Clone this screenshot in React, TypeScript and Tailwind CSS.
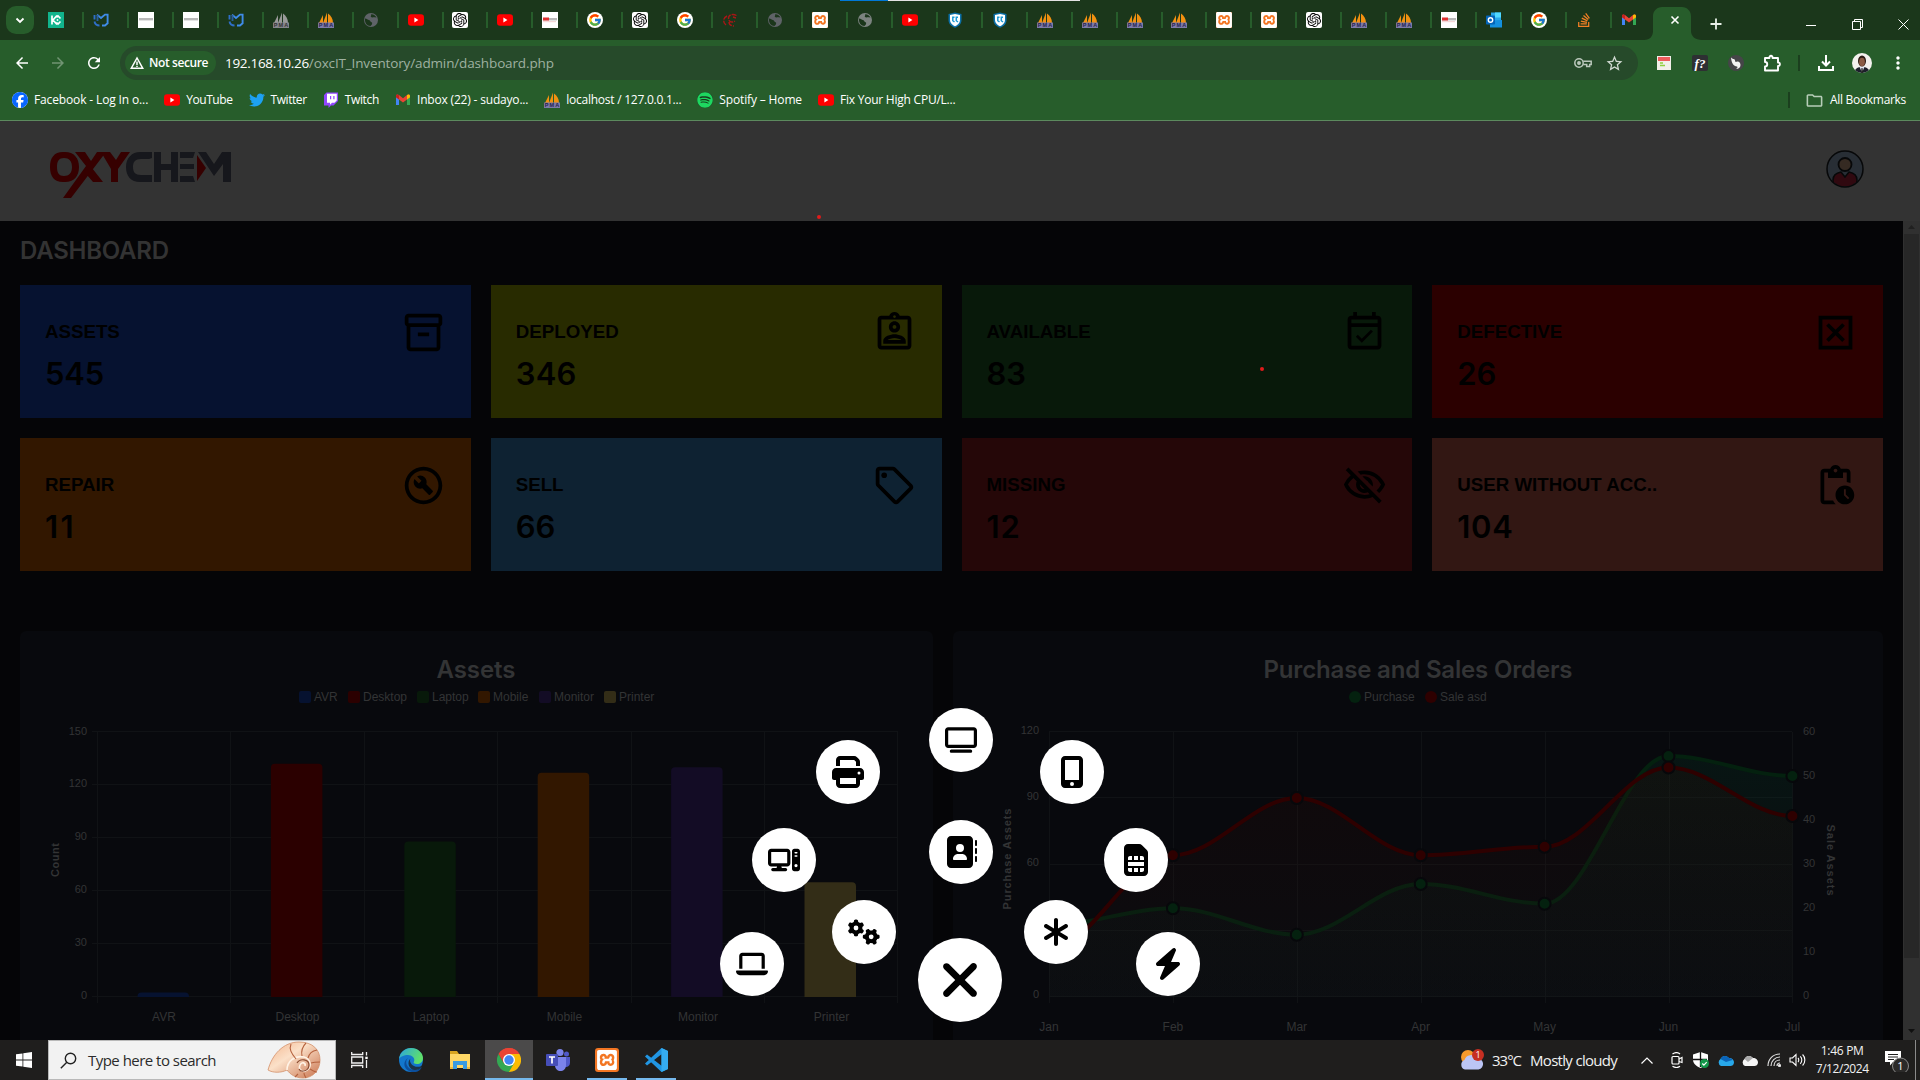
import { useLayoutEffect, useRef, useState, type ReactNode } from "react";
import {
  FaTv, FaPrint, FaMobileScreenButton, FaComputer, FaAddressBook, FaSimCard, FaGears, FaAsterisk,
  FaLaptop, FaBolt, FaXmark, FaSpotify, FaTwitter, FaStackOverflow, FaFacebook,
} from "react-icons/fa6";
import {
  MdOutlineInventory2, MdOutlineAssignmentInd, MdOutlineEventAvailable, MdOutlineDisabledByDefault,
  MdOutlineBuildCircle, MdOutlineSell, MdOutlineVisibilityOff, MdOutlinePendingActions,
  MdArrowBack, MdArrowForward, MdRefresh, MdStarBorder, MdVpnKey, MdMoreVert, MdOutlineExtension, MdOutlineFolder,
} from "react-icons/md";
import { FcGoogle } from "react-icons/fc";
import { SiOpenai, SiXampp } from "react-icons/si";

/* Text that is tracked so that it fills a given width. */
function Fit({ w, className = "", children }: { w: number; className?: string; children: string }) {
  const ref = useRef<HTMLSpanElement>(null);
  const [gap, setGap] = useState(0);
  useLayoutEffect(() => {
    if (ref.current) setGap((w - ref.current.offsetWidth) / children.length);
  }, [w, children]);
  return (
    <span ref={ref} className={`inline-block shrink-0 whitespace-nowrap ${className}`} style={{ letterSpacing: gap }}>
      {children}
    </span>
  );
}

/* ---------- small logos ---------- */

const YouTube = () => (
  <svg viewBox="0 0 16 16" className="size-4">
    <rect x="0" y="2.2" width="16" height="11.6" rx="3" fill="#f00" />
    <path d="M6.4 5.6v4.8l4-2.4z" fill="#fff" />
  </svg>
);
const Pma = ({ gray = false }: { gray?: boolean }) => (
  <svg viewBox="0 0 16 16" className="size-4">
    <g fill={gray ? "#9a9a9a" : "#f29111"}>
      <path d="M1 11 5 3v8z" />
      <path d="M5 11 9 .6V11z" />
      <path d="M10 11V1.5c3 2 5 5.500 5 9.500z" />
    </g>
    <rect x="0" y="10.500" width="16" height="5.500" fill={gray ? "#85858c" : "#7d7aa8"} />
    <text x="0.800" y="15.300" fontSize="5.500" fontWeight="700" fontFamily="Liberation Sans" fill={gray ? "#333" : "#26254f"} textLength="14.500">PMA</text>
  </svg>
);
const Globe = ({ light = false }: { light?: boolean }) => (
  <svg viewBox="0 0 16 16" className="size-4">
    <circle cx="8" cy="8" r="7" fill={light ? "#7c8380" : "#5f6368"} />
    <path d="M2 6.500c2 0 2.600 1.200 4 1.500 1.500.3 1.200 2 2.500 2.200 1.300.3.500 2.800-1 3.800C4 14 1.500 11 2 6.500zM8 2.200c1 1-.8 1.600 0 2.800.8 1 3.200-.2 5.500.8C12.500 3.300 10.500 2 8 2.200z" fill="#1b361b" />
  </svg>
);
const Gpt = () => (
  <span className="flex size-4 items-center justify-center rounded-[2px] bg-white text-black">
    <SiOpenai className="size-3.5" />
  </span>
);
const Xampp = () => (
  <span className="flex size-4 items-center justify-center rounded-[1px] bg-[#f37623] text-white">
    <SiXampp className="size-4" />
  </span>
);
const Google = () => (
  <span className="flex size-4 items-center justify-center rounded-full bg-white">
    <FcGoogle className="size-3.5" />
  </span>
);
const Page = ({ red = false }: { red?: boolean }) => (
  <svg viewBox="0 0 16 16" className="size-4">
    <rect width="16" height="16" fill="#fff" />
    <rect x="1" y="6" width="14" height="2.400" fill="#b9b9b9" />
    {red && <rect x="1" y="5.500" width="6" height="3" fill="#e03030" />}
    {red && <rect x="1" y="9.500" width="13" height="0.600" fill="#e8b0b0" />}
  </svg>
);
const MBlue = () => (
  <svg viewBox="0 0 16 16" className="size-4" fill="none" stroke="#3f8be8" strokeWidth="1.900">
    <path d="M4 2.600 8 6l4-3.400h2.600v8.600L12 13.500H9" />
    <path d="M1.500 3v4.500M1.500 9.500c.5 2.500 2 4 5 4" stroke="#2f6fc8" />
    <path d="M4.500 3v6" stroke="#2a5d9c" />
  </svg>
);
const Kc = () => (
  <svg viewBox="0 0 16 16" className="size-4" fill="none" stroke="#fff" strokeWidth="1.700">
    <rect width="16" height="16" fill="#11b48c" stroke="none" />
    <path d="M4 3.500v9M9 3.500 5 8l4 4.500M8.500 5.500 10 4l2.500 2.500M8.500 10.500 10 12l2.500-2.500" />
    <circle cx="9.500" cy="8" r="0.900" fill="#fff" stroke="none" />
  </svg>
);
const Swirl = () => (
  <svg viewBox="0 0 16 16" className="size-4" fill="none" stroke="#a81616" strokeWidth="1.400">
    <path d="M14.500 3.500C10 1 6 3.500 6.500 7c.5 3 4 4 6.500 2M5 4C1 6 .5 10 4 13M7 10c0 2.500 2 4 5 4M11 5l3 1" strokeDasharray="5 1" />
  </svg>
);
const Shield = () => (
  <svg viewBox="0 0 16 16" className="size-4">
    <path d="M8 .5 14.500 2v6c0 4-3 6.500-6.500 7.800C4.500 14.500 1.500 12 1.500 8V2z" fill="#0b6fa8" />
    <path d="M8 2 13 3v5c0 3-2.300 5-5 6.200C5.300 13 3 11 3 8V3z" fill="#fff" />
    <path d="M7.500 5.200H5.800v3.500l1.700 1.300M11 5.200H9.300v3.500L11 10" stroke="#1d9ad6" strokeWidth="1.500" fill="none" />
  </svg>
);
const Outlook = () => (
  <svg viewBox="0 0 16 16" className="size-4">
    <rect x="5" y="0.500" width="10" height="11" fill="#28a8ea" />
    <rect x="9" y="0.500" width="6" height="5" fill="#50d9ff" />
    <path d="M4 8.500 16 8v7.500H4z" fill="#1490df" />
    <rect x="0" y="3.500" width="9" height="9" rx="0.800" fill="#0364b8" />
    <circle cx="4.500" cy="8" r="2.200" fill="none" stroke="#fff" strokeWidth="1.400" />
  </svg>
);
const Gmail = () => (
  <svg viewBox="0 0 16 16" className="size-4">
    <path d="M1 4v9h3V7z" fill="#4285f4" />
    <path d="M15 4v9h-3V7z" fill="#34a853" />
    <path d="M1 3.500C1.500 2 3 2.200 4 3l4 3.200L12 3c1-.8 2.500-1 3 .5v1.800L8 10.500 1 5.300z" fill="#ea4335" />
    <path d="M12 3c1.200-1 3-.6 3 1v1.300L12 7.600z" fill="#fbbc04" />
    <path d="M1 4v1.300l3 2.300V3.200L2.500 2.600C1.500 2.700 1 3.200 1 4z" fill="#c5221f" />
  </svg>
);
const Twitch = () => (
  <svg viewBox="0 0 16 16" className="size-4">
    <path d="M1 3 3.500.5H15V9l-4.500 4.500H8L5.500 16v-2.500H1z" fill="#9146ff" />
    <path d="M4 1.700h9.800v6.800l-2.300 2.200H9l-2 2v-2H4z" fill="#fff" />
    <path d="M7.600 4v3.200M10.900 4v3.200" stroke="#9146ff" strokeWidth="1.200" />
  </svg>
);

const favicons: ReactNode[] = [
  <Kc />, <MBlue />, <Page />, <Page />, <MBlue />, <Pma gray />, <Pma />, <Globe />, <YouTube />, <Gpt />, <YouTube />,
  <Page red />, <Google />, <Gpt />, <Google />, <Swirl />, <Globe />, <Xampp />, <Globe light />, <YouTube />, <Shield />,
  <Shield />, <Pma />, <Pma />, <Pma />, <Pma />, <Xampp />, <Xampp />, <Gpt />, <Pma />, <Pma />, <Page red />, <Outlook />,
  <Google />, <FaStackOverflow className="size-4 text-[#f48024]" />, <Gmail />,
];

/* ---------- browser chrome ---------- */

function TabStrip() {
  return (
    <div className="flex h-10 items-end bg-[#1b371b]">
      <div className="mb-[6px] ml-[6px] flex h-7 w-7 items-center justify-center rounded-[10px] bg-[#275d2b]">
        <svg viewBox="0 0 10 10" className="size-2.5" fill="none" stroke="#fff" strokeWidth="1.800"><path d="M1.500 3.500 5 7l3.500-3.500" /></svg>
      </div>
      <div className="ml-[14px] flex h-10 w-[1596px]">
        {favicons.map((icon, i) => (
          <div key={i} className="flex h-10 w-[44.940px] shrink-0 items-center">
            {icon}
            {i < favicons.length - 1 && <span className="ml-[18px] h-4 w-0.5 bg-[#275d2b]" />}
          </div>
        ))}
      </div>
      <svg viewBox="0 0 58 33" className="h-[33px] w-[58px]">
        <path d="M0 33c6 0 9-4 9-9V9c0-5 4-9 9-9h20c5 0 9 4 9 9v15c0 5 4 9 11 9z" fill="#275d2b" />
        <path d="m28 10 7 7m0-7-7 7" transform="translate(-.5 -.5)" stroke="#fff" strokeWidth="1.600" />
      </svg>
      <svg viewBox="0 0 12 12" className="mb-[10px] ml-2 size-3" stroke="#e8f0e8" strokeWidth="1.800"><path d="M6 .5v11M.5 6h11" /></svg>
      <svg viewBox="0 0 10 10" className="mb-[10px] ml-[84px] size-[10px]" stroke="#fff"><path d="M0 5.500h10" /></svg>
      <svg viewBox="0 0 11 11" className="mb-[10px] ml-9 size-[11px]" stroke="#fff" fill="none"><path d="M.5 2.500h8v8h-8zM2.500 2.500v-2h8v8h-2" /></svg>
      <svg viewBox="0 0 11 11" className="mb-[10px] ml-[35px] size-[11px]" stroke="#fff"><path d="m.5.5 10 10m0-10-10 10" /></svg>
    </div>
  );
}

function AddressBar() {
  return (
    <div className="flex h-[46px] items-center bg-[#275d2b] text-white">
      <MdArrowBack className="ml-[13px] size-[18px]" />
      <MdArrowForward className="ml-[18px] size-[18px] text-[#719473]" />
      <MdRefresh className="ml-[18px] size-[18px]" />
      <div className="ml-[17px] flex h-[34px] w-[1518px] items-center rounded-full bg-[#264a2a]">
        <div className="ml-[5px] flex h-6 w-[91px] items-center rounded-full bg-[#275d2b] pl-[5px]">
          <svg viewBox="0 0 14 13" className="mr-[5px] size-[14px]" fill="none" stroke="#fff" strokeWidth="1.500">
            <path d="M7 1.500 1.200 11.800h11.600z" /><path d="M7 5v3.500M7 9.300v1.300" />
          </svg>
          <Fit w={59} className="text-[12px] font-semibold">Not secure</Fit>
        </div>
        <Fit w={84} className="ml-[9px] text-[13.500px]">192.168.10.26</Fit>
        <Fit w={245} className="text-[13.500px] text-[#9fb1a1]">/oxcIT_Inventory/admin/dashboard.php</Fit>
        <MdVpnKey className="hidden" />
        <svg viewBox="0 0 18 12" className="ml-auto h-3 w-[18px]" fill="none" stroke="#bac7bb" strokeWidth="1.500">
          <circle cx="5" cy="6" r="4.200" /><path d="M9.200 4.300h8v3.300h-1.500v2h-3v-2H9.200" /><circle cx="5" cy="6" r="1.200" fill="#bac7bb" />
        </svg>
        <MdStarBorder className="mr-[14px] ml-[13px] size-[19px] text-[#d0d9d1]" />
      </div>
      <svg viewBox="0 0 14 14" className="ml-[19px] size-[14px]">
        <rect width="14" height="14" fill="#f1efe8" /><rect x="1" y="1" width="12" height="4" fill="#ee5b5b" />
        <path d="M3 7h3M3 9.500h5" stroke="#8fcf3c" strokeWidth="1.300" />
      </svg>
      <span className="ml-[21px] flex size-4 items-center justify-center rounded-[2px] bg-[#2e3033] font-['Liberation_Serif'] text-[13px] leading-none font-bold italic">f?</span>
      <svg viewBox="0 0 16 16" className="ml-5 size-4">
        <circle cx="8" cy="8" r="8" fill="#454548" /><path d="M3 2.500 5 4c2-.5 2 1.500 2.500 3 3-1.500 5 .5 5 3 0 2.500-2 4-4.500 4 1.500-1 2-2 1-2.500C5.500 11.500 3.500 8 3 2.500z" fill="#f3f3f3" />
      </svg>
      <svg viewBox="0 0 18 18" className="ml-[19px] size-[18px]" fill="none" stroke="#fff" strokeWidth="1.900">
        <path d="M2 4h4.500C6 1 10 1 9.500 4H15v4.500c2.500-.3 2.500 3.800 0 3.500v4.500H2v-4c3 0 3-4.500 0-4.500z" strokeLinejoin="round" />
      </svg>
      <span className="ml-[17px] h-4 w-0.5 bg-[#1b3f1e]" />
      <svg viewBox="0 0 16 16" className="ml-[18px] size-4" fill="none" stroke="#fff" strokeWidth="2">
        <path d="M8 0v10M4 6.500 8 10.500l4-4M1 11v4h14v-4" />
      </svg>
      <svg viewBox="0 0 20 20" className="ml-[18px] size-5">
        <clipPath id="me"><circle cx="10" cy="10" r="10" /></clipPath>
        <g clipPath="url(#me)">
          <rect width="20" height="20" fill="#f3f1ee" /><path d="M2 20c1-5 4-6 8-6s7 1 8 6z" fill="#1c1f2b" />
          <path d="m7.500 13.500 2.500 6.500 2.500-6.500z" fill="#e6e9f5" /><path d="M9.500 15h1l.7 5H9z" fill="#222" />
          <ellipse cx="10" cy="8" rx="4" ry="5.500" fill="#2c1a14" /><ellipse cx="10" cy="9" rx="2.900" ry="4.300" fill="#8a5a44" />
        </g>
      </svg>
      <MdMoreVert className="ml-[16px] size-5" />
    </div>
  );
}

function Bookmark({ icon, gap = "ml-[18px]", w, children }: { icon: ReactNode; gap?: string; w: number; children: string }) {
  return (
    <div className={`flex items-center gap-[6px] ${gap}`}>
      {icon}
      <Fit w={w}>{children}</Fit>
    </div>
  );
}

function BookmarkBar() {
  return (
    <div className="flex h-[35px] items-start border-b border-[#5c8a5e] bg-[#275d2b] pt-[5px] text-[12px] text-white">
      <div className="flex h-[18px] w-full items-center">
        <Bookmark gap="ml-3" w={114} icon={<span className="size-4 rounded-full bg-white"><FaFacebook className="size-4 text-[#0866ff]" /></span>}>Facebook - Log In o...</Bookmark>
        <Bookmark gap="ml-4" w={46} icon={<YouTube />}>YouTube</Bookmark>
        <Bookmark gap="ml-4" w={36} icon={<FaTwitter className="size-4 text-[#1da1f2]" />}>Twitter</Bookmark>
        <Bookmark gap="ml-4" w={34} icon={<Twitch />}>Twitch</Bookmark>
        <Bookmark gap="ml-4" w={111} icon={<Gmail />}>Inbox (22) - sudayo...</Bookmark>
        <Bookmark gap="ml-4" w={115} icon={<Pma />}>localhost / 127.0.0.1...</Bookmark>
        <Bookmark gap="ml-4" w={83} icon={<span className="size-4 rounded-full bg-[#183b1c]"><FaSpotify className="size-4 text-[#1ed760]" /></span>}>Spotify – Home</Bookmark>
        <Bookmark gap="ml-4" w={115} icon={<YouTube />}>Fix Your High CPU/L...</Bookmark>
        <span className="ml-auto h-4 w-0.5 bg-[#1b3f1e]" />
        <MdOutlineFolder className="ml-[15px] size-[19px] text-[#b7cdb8]" />
        <Fit w={76} className="mr-[14px] ml-[6px]">All Bookmarks</Fit>
      </div>
    </div>
  );
}

/* ---------- application ---------- */

function Header() {
  return (
    <header className="flex h-[100px] items-start justify-between bg-[#333333] pt-[29px] pr-14 pl-[49px]">
      <svg viewBox="0 0 182 48" className="mt-px h-12 w-[182px]">
        <g fill="#360000">
          <path fillRule="evenodd" d="M14 1h2c9 0 14 6 14 15s-5 15-14 15h-2C5 31 1 25 1 16S5 1 14 1zm1 6c-5 0-7 3-7 9s2 9 7 9 8-3 8-9-3-9-8-9z" />
          <path d="M26 1h10l6 9 6-9h9L22 47h-8l23-32zM43 17l11 14H44l-6-7z" />
          <path d="M52 1h9l6 8 5-8h9L69 18v13h-7V18z" />
          <path d="m148 4 9 13-9 13z" />
        </g>
        <g fill="#16171c">
          <path d="M103 1v6l-3 1h-8c-6 0-8 3-8 8s2 8 8 8h11v7H91c-9 0-14-6-14-15S83 1 91 1z" />
          <path d="M105 1h7v12h10V1h7v30h-7V19h-10v12h-7z" />
          <path d="M131 1h15l-2 6h-13zM131 13h14v5h-14zM131 25h13l2 6h-15z" />
          <path d="M149 1h8l8 12 8-12h9v30h-8V13l-9 12z" />
        </g>
      </svg>
      <svg viewBox="0 0 38 38" className="size-[38px]">
        <clipPath id="av"><circle cx="19" cy="19" r="17.500" /></clipPath>
        <circle cx="19" cy="19" r="18" fill="#282e35" />
        <g clipPath="url(#av)">
          <path d="M7 38v-8c0-4 3-7 8-8l4 5 4-5c5 1 8 4 8 8v8z" fill="#300910" stroke="#070809" strokeWidth="1.500" />
        </g>
        <circle cx="19" cy="14.500" r="6.500" fill="#352a22" stroke="#070809" strokeWidth="1.800" />
        <circle cx="19" cy="19" r="18" fill="none" stroke="#070809" strokeWidth="1.500" />
      </svg>
    </header>
  );
}

const cards = [
  { name: "ASSETS", value: "545", w: 59.5, bg: "bg-[#061230]", Icon: MdOutlineInventory2 },
  { name: "DEPLOYED", value: "346", w: 60.5, bg: "bg-[#282b00]", Icon: MdOutlineAssignmentInd },
  { name: "AVAILABLE", value: "83", w: 40, bg: "bg-[#08190a]", Icon: MdOutlineEventAvailable },
  { name: "DEFECTIVE", value: "26", w: 39, bg: "bg-[#2b0000]", Icon: MdOutlineDisabledByDefault },
  { name: "REPAIR", value: "11", w: 31, bg: "bg-[#321700]", Icon: MdOutlineBuildCircle },
  { name: "SELL", value: "66", w: 40, bg: "bg-[#0e2232]", Icon: MdOutlineSell },
  { name: "MISSING", value: "12", w: 34, bg: "bg-[#250708]", Icon: MdOutlineVisibilityOff },
  { name: "USER WITHOUT ACC..", value: "104", w: 56, bg: "bg-[#321713]", Icon: MdOutlinePendingActions },
];

const SANS = "Liberation Sans, Arial, sans-serif";
const GRID = "#101215";
const TEXT = "#333435";

const bars = [
  { name: "AVR", value: 2.5, color: "#061230", legend: 0, lx: 299 },
  { name: "Desktop", value: 132, color: "#2b0000", legend: 0, lx: 348 },
  { name: "Laptop", value: 88, color: "#08190a", legend: 0, lx: 417 },
  { name: "Mobile", value: 127, color: "#321700", legend: 0, lx: 478 },
  { name: "Monitor", value: 130, color: "#130c25", legend: 0, lx: 539 },
  { name: "Printer", value: 65, color: "#332d17", legend: 0, lx: 604 },
];

/* Bar chart; its drawing space starts at the card's corner (20, 631). */
function AssetsChart() {
  const x0 = 78, y0 = 366, top = 101, step = 133.4;
  return (
    <svg viewBox="0 0 913 409" className="h-[409px] w-[913px] rounded-t-md bg-[#08090d]" fontFamily={SANS} fontSize="12" fill={TEXT}>
      <text x="456" y="47" textAnchor="middle" fontFamily="Inter" fontWeight="600" fontSize="24" textLength="79">Assets</text>
      {bars.map((b) => (
        <g key={b.name}>
          <rect x={b.lx - 20} y="60" width="12" height="12" rx="2" fill={b.color} />
          <text x={b.lx - 5} y="70">{b.name}</text>
        </g>
      ))}
      <g stroke={GRID}>
        {[0, 1, 2, 3, 4, 5].map((i) => (
          <path key={i} d={`M${x0 - 6} ${Math.round(top + i * 53) - 0.5}H878`} />
        ))}
        {[0, 1, 2, 3, 4, 5, 6].map((i) => (
          <path key={i} d={`M${Math.round(x0 + i * step) - 0.5} ${top}V${y0 + 6}`} />
        ))}
      </g>
      {[150, 120, 90, 60, 30, 0].map((v, i) => (
        <text key={v} x="67" y={103.5 + i * 52.9} textAnchor="end" fontSize="11">{v}</text>
      ))}
      {bars.map((b, i) => {
        const x = 117.5 + i * 133.4;
        const h = (b.value * 265) / 150;
        return (
          <g key={b.name}>
            <path d={`M${x} ${y0}V${y0 - h + 4}q0-4 4-4h43.500q4 0 4 4V${y0}z`} fill={b.color} />
            <text x={144 + i * 133.5} y="390" textAnchor="middle">{b.name}</text>
          </g>
        );
      })}
      <text transform="translate(39 229) rotate(-90)" textAnchor="middle" fontSize="11" fontWeight="700" textLength="34">Count</text>
    </svg>
  );
}

const months = ["Jan", "Feb", "Mar", "Apr", "May", "Jun", "Jul"];
const green = [294, 277.3, 303.7, 253, 272.7, 125, 145];
const red = [318, 224.3, 167, 224.3, 215.7, 136.5, 185];

function curve(ys: number[]) {
  const step = 123.9;
  return ys
    .map((y, i) => {
      const x = 96 + i * step;
      if (i === 0) return `M${x} ${y}`;
      return `C${x - step + step * 0.35} ${ys[i - 1]} ${x - step * 0.35} ${y} ${x} ${y}`;
    })
    .join("");
}

/* Line chart; its drawing space starts at the card's corner (953, 631). */
function OrdersChart() {
  const series = [
    { ys: green, color: "#04210f", id: "ga" },
    { ys: red, color: "#2e0000", id: "ra" },
  ];
  return (
    <svg viewBox="0 0 930 409" className="h-[409px] w-[930px] rounded-t-md bg-[#08090d]" fontFamily={SANS} fontSize="12" fill={TEXT}>
      <defs>
        <linearGradient id="ga" x1="0" y1="0" x2="0" y2="1"><stop offset="0" stopColor="#06402a" stopOpacity="0.220" /><stop offset="1" stopColor="#10201c" stopOpacity="0.100" /></linearGradient>
        <linearGradient id="ra" x1="0" y1="0" x2="0" y2="1"><stop offset="0" stopColor="#3a0a00" stopOpacity="0.160" /><stop offset="1" stopColor="#1c1c20" stopOpacity="0.160" /></linearGradient>
      </defs>
      <text x="465" y="47" textAnchor="middle" fontFamily="Inter" fontWeight="600" fontSize="24" textLength="309">Purchase and Sales Orders</text>
      <circle cx="402" cy="66" r="6" fill="#04210f" /><text x="411" y="70">Purchase</text>
      <circle cx="478" cy="66" r="6" fill="#2e0000" /><text x="487" y="70">Sale asd</text>
      <g stroke={GRID}>
        {[0, 1, 2, 3, 4].map((i) => <path key={i} d={`M96 ${Math.round(101 + i * 66.25) - 0.5}H839`} />)}
        {months.map((m, i) => <path key={m} d={`M${Math.round(96 + i * 123.9) + 0.5} 101V372`} />)}
      </g>
      {[120, 90, 60, 30, 0].map((v, i) => <text key={v} x="86" y={102.5 + i * 66.1} textAnchor="end" fontSize="11">{v}</text>)}
      {[60, 50, 40, 30, 20, 10, 0].map((v, i) => <text key={v} x="850" y={103.5 + i * 44} fontSize="11">{v}</text>)}
      {months.map((m, i) => <text key={m} x={96 + i * 123.9} y="400" textAnchor="middle">{m}</text>)}
      {series.map((s) => (
        <g key={s.id}>
          <path d={`${curve(s.ys)}V366H96z`} fill={`url(#${s.id})`} />
          <path d={curve(s.ys)} fill="none" stroke={s.color} strokeWidth="4" />
        </g>
      ))}
      {series.map((s) => s.ys.map((y, i) => (
        <circle key={s.id + i} cx={96 + i * 123.9} cy={y} r="6" fill={s.color} stroke="#07080b" strokeWidth="2" />
      )))}
      <text transform="translate(-126 0) translate(0 0)" />
      <text transform="translate(-126 0)" />
      <text transform="translate(58 228) rotate(-90)" textAnchor="middle" fontSize="11" fontWeight="700" textLength="101">Purchase Assets</text>
      <text transform="translate(874 229) rotate(90)" textAnchor="middle" fontSize="11" fontWeight="700" textLength="71">Sale Assets</text>
    </svg>
  );
}

function Dashboard() {
  return (
    <main className="flex h-[819px] bg-[#050507]">
      <div className="w-[1903px] pt-5 pl-5">
        <h1 className="flex h-5 items-center font-['Inter'] text-[24px] leading-5 font-semibold text-[#333333]">
          <Fit w={149}>DASHBOARD</Fit>
        </h1>
        <div className="mt-6 grid w-[1863px] grid-cols-4 gap-5">
          {cards.map(({ name, value, w, bg, Icon }) => (
            <div key={name} className={`flex h-[133px] justify-between pt-[25px] pr-[25px] pl-[25px] text-black ${bg}`}>
              <div>
                <div className="mt-[11px] font-['Liberation_Sans'] text-[18.720px] leading-[22px] font-bold whitespace-nowrap">{name}</div>
                <Fit w={w} className="mt-[13px] font-['Inter'] text-[31px] leading-[36px] font-semibold">{value}</Fit>
              </div>
              <Icon className="size-[45px]" />
            </div>
          ))}
        </div>
        <div className="mt-[60px] flex gap-5">
          <AssetsChart />
          <OrdersChart />
        </div>
      </div>
      <div className="flex w-[17px] flex-col items-center justify-between bg-[#303030]">
        <svg viewBox="0 0 17 13" className="h-[13px] w-[17px]"><path d="m5 8 3.500-4L12 8z" fill="#202020" /></svg>
        <div className="mb-auto h-[724px] w-[15px] bg-[#272727]" />
        <svg viewBox="0 0 17 17" className="h-[17px] w-[17px]"><path d="m5 6 3.500 4L12 6z" fill="#101010" /></svg>
      </div>
    </main>
  );
}

/* Radial quick menu floating over the dashboard. */
const actions = [
  { at: "left-[929px] top-[708px]", Icon: FaTv },
  { at: "left-[816px] top-[740px]", Icon: FaPrint },
  { at: "left-[1040px] top-[740px]", Icon: FaMobileScreenButton },
  { at: "left-[752px] top-[828px]", Icon: FaComputer },
  { at: "left-[929px] top-[820px]", Icon: FaAddressBook },
  { at: "left-[1104px] top-[828px]", Icon: FaSimCard },
  { at: "left-[832px] top-[900px]", Icon: FaGears },
  { at: "left-[1024px] top-[900px]", Icon: FaAsterisk },
  { at: "left-[720px] top-[932px]", Icon: FaLaptop },
  { at: "left-[1136px] top-[932px]", Icon: FaBolt },
];

function QuickMenu() {
  return (
    <>
      {actions.map(({ at, Icon }) => (
        <button key={at} className={`absolute flex size-16 items-center justify-center rounded-full bg-white text-black ${at}`}>
          <Icon className="h-8 w-auto" />
        </button>
      ))}
      <button className="absolute top-[938px] left-[918px] flex size-[84px] items-center justify-center rounded-full bg-white text-black">
        <FaXmark className="h-[54px] w-auto" />
      </button>
      <span className="absolute top-[215px] left-[817px] size-1 rounded-full bg-[#e01b1b]" />
      <span className="absolute top-[367px] left-[1260px] size-1 rounded-full bg-[#e01b1b]" />
      <div className="absolute top-0 left-[840px] flex h-px w-[240px] bg-[#e4e4e4]">
        <div className="h-px w-12 bg-[#0078d7]" />
      </div>
    </>
  );
}

/* ---------- taskbar ---------- */

const Shell = () => (
  <svg viewBox="0 0 54 38" className="h-[38px] w-[54px]">
    <defs><linearGradient id="sh" x1="0" y1="0" x2="1" y2="1"><stop offset="0" stopColor="#f3b48c" /><stop offset=".4" stopColor="#fbe0c8" /><stop offset="1" stopColor="#c9744f" /></linearGradient></defs>
    <path d="M1 29C5 14 16 1 32 1c14 0 21 8 21 18s-7 18-17 18c-8 0-13-4-16-8C14 32 6 32 1 29z" fill="url(#sh)" stroke="#d3916b" strokeWidth="0.800" />
    <g fill="none" stroke="#c47a55">
      <path d="M20 29c0-9 8-15 17-13 7 2 8 10 3 13s-9-1-7-5 6-2 5 1" stroke="#fff3e6" strokeWidth="1.600" />
      <path d="M29 18C24 12 22 8 24 3M35 15c-1-5 0-9 4-13M41 17c1-4 4-7 9-8M44 22c3-1 5-1 9-1M43 28c3 2 5 3 7 3M37 32c0 2 1 3 2 5M31 33l-3 3" strokeWidth="1.100" stroke="#b5623e" />
    </g>
    <path d="M30 22c3-5 12-4 12 2s-8 8-10 4" fill="none" stroke="#8a4a30" strokeWidth="1.200" />
  </svg>
);
const Edge = () => (
  <svg viewBox="0 0 24 24" className="size-6">
    <defs><linearGradient id="e1" x1="0" y1="0" x2="1" y2=".4"><stop offset="0" stopColor="#2aa5e0" /><stop offset="1" stopColor="#5fe06a" /></linearGradient></defs>
    <circle cx="12" cy="12" r="12" fill="#1377cc" />
    <path d="M0 11C1 4 6 0 12 0c7 0 12 5 12 10 0 4-3 6-6 6-3 0-4-1-3-2.500C16.500 10 13 7 9 7c-4 0-8 2-9 4z" fill="url(#e1)" />
    <path d="M9 10c-4 4-1 12 7 12 3 0 5-1 7-3-3 6-9 6-13 4-6-3-6-10-1-13z" fill="#0c4f9c" />
    <path d="M12 10c-2 2-1 6 3 8s8 0 8-1c-1 3-4 5-7 5-6 0-9-8-4-12z" fill="#1f1e1d" opacity=".75" />
  </svg>
);
const Explorer = () => (
  <svg viewBox="0 0 24 24" className="size-6">
    <path d="M2 3h7l2 3h11v3H2z" fill="#d9a520" /><path d="M2 6h20v14H2z" fill="#ffd765" />
    <path d="M5 13h14v8h-4v-4H9v4H5z" fill="#3a9be0" /><path d="M2 19h3v2H2zm17 0h3v2h-3z" fill="#f0b93a" />
  </svg>
);
const Chrome = () => (
  <svg viewBox="0 0 24 24" className="size-6">
    <path d="M12 12 1.600 6A12 12 0 0 1 22.400 6z" fill="#ea4335" /><path d="M12 12V6h10.400A12 12 0 0 1 12 24z" fill="#fbbc04" />
    <path d="M12 12 6.800 15 1.600 6A12 12 0 0 0 12 24l5.200-9z" fill="#34a853" /><path d="M1.600 6 6.800 15 12 12V6h10.400A12 12 0 0 0 1.600 6z" fill="#ea4335" />
    <circle cx="12" cy="12" r="6" fill="#fff" /><circle cx="12" cy="12" r="4.700" fill="#4285f4" />
  </svg>
);
const Teams = () => (
  <svg viewBox="0 0 24 24" className="size-6">
    <circle cx="14" cy="4.500" r="3.600" fill="#7b83eb" /><circle cx="20.500" cy="6" r="2.500" fill="#5059c9" />
    <path d="M16 9h8v6c0 4-5 5-6 3z" fill="#5059c9" /><path d="M9 9h11v8c0 8-11 8-11 0z" fill="#7b83eb" />
    <rect x="0" y="6" width="12" height="12" rx="1" fill="#464eb8" /><path d="M3 9h6M6 9v6.500" stroke="#fff" strokeWidth="1.700" />
  </svg>
);
const Code = () => (
  <svg viewBox="0 0 24 24" className="size-6">
    <path d="M17.500 0 24 3v18l-6.500 3L1 8.500 3 6.500 17.500 17.800V6.200L3 17.500l-2-2z" fill="#2196e3" /><path d="M17.500 0 24 3v18l-6.500 3z" fill="#35adf2" />
  </svg>
);

function Taskbar() {
  return (
    <footer className="flex h-10 items-center bg-[#1f1e1d] text-white">
      <svg viewBox="0 0 16 16" className="ml-4 size-4" fill="#fff"><path d="M0 2.300 6.500 1.400v6.200H0zM7.300 1.300 16 0v7.600H7.300zM0 8.400h6.500v6.200L0 13.700zM7.300 8.400H16V16l-8.700-1.300z" /></svg>
      <div className="ml-4 flex h-10 w-72 items-center border border-[#b9b9b9] bg-[#f2f2f2] text-[#2b2b2b]">
        <svg viewBox="0 0 17 17" className="ml-[11px] size-[17px]" fill="none" stroke="#222" strokeWidth="1.400"><circle cx="10.500" cy="6.500" r="5.200" /><path d="M6.800 10.200.8 16.200" /></svg>
        <Fit w={128} className="ml-[11px] text-[15px]">Type here to search</Fit>
        <div className="mr-[14px] ml-auto"><Shell /></div>
      </div>
      <svg viewBox="0 0 18 16" className="ml-[15px] h-4 w-[18px]" fill="none" stroke="#f0f0f0" strokeWidth="1.300">
        <path d="M.7 0v2.500h11V0M.7 16v-2.500h11V16M.7 5h11v6H.7zM15.500 0v3.500M15.500 8v8" /><rect x="14.300" y="4.700" width="2.400" height="2.400" fill="#fff" stroke="none" />
      </svg>
      <div className="ml-[30px]"><Edge /></div>
      <div className="ml-[25px]"><Explorer /></div>
      <div className="ml-[13px] flex h-10 w-12 items-center justify-center border-b-2 border-[#76b9ed] bg-[#4b4a4a] pt-0.5"><Chrome /></div>
      <div className="ml-[13px]"><Teams /></div>
      <div className="ml-[17px] flex h-10 w-10 items-center justify-center border-b-2 border-[#76b9ed] pt-0.5">
        <span className="flex size-6 items-center justify-center rounded-[3px] bg-[#f37623]"><SiXampp className="size-5" /></span>
      </div>
      <div className="ml-[9px] flex h-10 w-10 items-center justify-center border-b-2 border-[#76b9ed] pt-0.5"><Code /></div>

      <div className="ml-auto flex h-10 w-[460px] items-center text-[#f1f1f1]">
        <svg viewBox="0 0 24 22" className="h-[22px] w-6">
          <circle cx="8" cy="8" r="7" fill="#f79a2b" /><path d="M5 20.500a5 5 0 0 1-.5-9.500 6.500 6.500 0 0 1 12-1.500 5.500 5.500 0 0 1 2 11z" fill="#bcc5f5" />
          <circle cx="18" cy="6" r="6" fill="#c62f22" /><text x="18" y="9.300" textAnchor="middle" fontSize="9" fill="#fff" fontFamily="Open Sans">1</text>
        </svg>
        <Fit w={29} className="ml-2 text-[15px]">33°C</Fit>
        <Fit w={87} className="ml-[9px] text-[15px]">Mostly cloudy</Fit>
        <svg viewBox="0 0 12 7" className="ml-6 h-[7px] w-3" fill="none" stroke="#fff" strokeWidth="1.200"><path d="m.5 6.500 5.500-5.500 5.500 5.500" /></svg>
        <svg viewBox="0 0 12 16" className="ml-[18px] h-4 w-3" fill="none" stroke="#fff" strokeWidth="1.200"><rect x="1" y="4.500" width="7" height="7.500" rx="1" /><path d="m8 7 3-1.500v5L8 9.500M1.500 2C4 .3 7 .3 9 2M1.500 14.300c2.500 1.500 5.500 1.500 7.500 0" /></svg>
        <svg viewBox="0 0 16 16" className="ml-[10px] size-4">
          <path d="M7.500 0 15 2.500v5c0 4-3 6.500-7.500 8.500C3 14 0 11.500 0 7.500v-5z" fill="#fff" /><path d="M7.500 0v15M0 7.500h14" stroke="#111" strokeWidth="1.300" />
          <circle cx="11.500" cy="11.500" r="4.500" fill="#13974a" /><path d="m9.300 11.500 1.600 1.700 2.800-3" stroke="#fff" fill="none" strokeWidth="1.200" />
        </svg>
        <svg viewBox="0 0 17 11" className="ml-2 h-[11px] w-[17px]"><path d="M4 11a4 4 0 0 1-.5-7A5 5 0 0 1 12 3c3 0 5 2 5 4.500S15 11 13.500 11z" fill="#28a8ea" /><path d="M3.500 4A5 5 0 0 1 12 3c2 0 3 1 3.500 2L9 7z" fill="#0a64b8" /></svg>
        <svg viewBox="0 0 17 11" className="ml-[7px] h-[11px] w-[17px]"><path d="M4 11a4 4 0 0 1-.5-7A5 5 0 0 1 12 3c3 0 5 2 5 4.500S15 11 13.500 11z" fill="#f6f6f6" /><path d="M3.500 4A5 5 0 0 1 12 3L7 7z" fill="#aaa" /></svg>
        <svg viewBox="0 0 14 14" className="ml-[9px] size-[14px]" fill="none" stroke="#ddd" strokeWidth="1.200"><path d="M1 13C1 6 6 1 13 1M4 13c0-5 4-9 9-9M7 13c0-3.500 2.500-6 6-6M10 13c0-2 1-3 3-3" /><circle cx="12.500" cy="12.500" r="1" fill="#fff" /></svg>
        <svg viewBox="0 0 17 14" className="ml-[8px] h-[14px] w-[17px]" fill="none" stroke="#fff" strokeWidth="1.100"><path d="M1 5h2.500L7 1.500v11L3.500 9H1zM9 5c1 1 1 3 0 4M11.300 3.300c2 2 2 5.500 0 7.500M13.600 1.500c3 3 3 8 0 11" /></svg>
        <div className="ml-[9px] flex w-[54px] flex-col items-center text-[12px] leading-[18px]">
          <Fit w={43}>1:46 PM</Fit>
          <Fit w={53}>7/12/2024</Fit>
        </div>
        <div className="relative ml-[16px] h-6 w-6">
          <svg viewBox="0 0 24 24" className="size-6"><path d="M0 3h16v11H8l-3 3.500V14H0z" fill="#fff" /><path d="M3 6.500h10M3 9h10M3 11.500h6" stroke="#1f1e1d" strokeWidth="1.100" /><circle cx="15.500" cy="18" r="8" fill="#2b2a29" stroke="#8a8a8a" /><text x="15.500" y="22" textAnchor="middle" fontSize="11" fill="#fff" fontFamily="Open Sans">1</text></svg>
        </div>
        <div className="ml-auto mr-1 h-10 w-px bg-[#8a8a8a]" />
      </div>
    </footer>
  );
}

export default function App() {
  return (
    <div className="relative flex h-[1080px] w-[1920px] flex-col overflow-hidden bg-[#050507] font-['Open_Sans',sans-serif]">
      <TabStrip />
      <AddressBar />
      <BookmarkBar />
      <Header />
      <Dashboard />
      <Taskbar />
      <QuickMenu />
    </div>
  );
}
